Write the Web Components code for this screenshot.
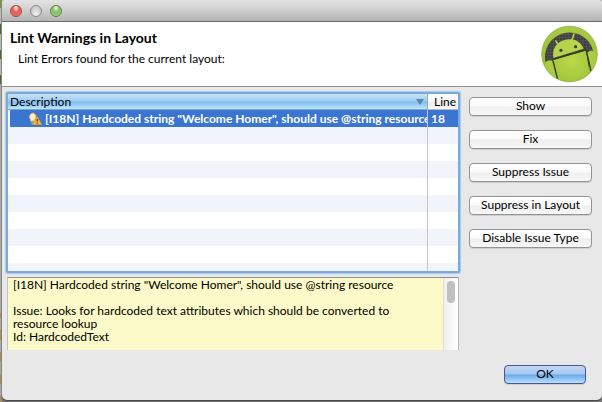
<!DOCTYPE html>
<html lang="en">
<head>
<meta charset="utf-8">
<title>Lint Warnings in Layout</title>
<style>
html,body{height:100%;margin:0}
body{font:12px/13px Lato,"Open Sans",sans-serif;color:#000;background:#555}
</style>
</head>
<body>
<lint-dialog></lint-dialog>
<script>
function define(name, html) {
  const template = document.createElement('template');
  template.innerHTML = html;
  customElements.define(name, class extends HTMLElement {
    constructor() {
      super();
      this.attachShadow({mode: 'open'}).append(template.content.cloneNode(true));
    }
  });
}

define('title-bar', `
<style>
:host{display:flex;align-items:center;gap:8px;height:21px;padding-left:8px;border-bottom:1px solid #6b6b6b;
background:linear-gradient(#e3e3e3,#d3d3d3 40%,#b3b3b3);border-radius:4px 4px 0 0}
button{width:12px;height:12px;padding:0;border-radius:50%;border:1px solid #8b8b8b;background:radial-gradient(ellipse at 50% 85%,#f4f4f4,#c6c6c6 75%)}
.close{border-color:#9c4644;background:radial-gradient(ellipse at 50% 15%,#fbd0ca 0 12%,#e5534f 45%,#f48a84 100%)}
.zoom{border-color:#58823f;background:radial-gradient(ellipse at 50% 15%,#e0f0d0 0 12%,#80b961 45%,#bae49a 100%)}
</style>
<button class="close" aria-label="Close"></button><button aria-label="Minimize" disabled></button><button class="zoom" aria-label="Zoom"></button>`);

define('android-logo', `
<style>:host{display:block;width:58px;height:58px}svg{display:block}</style>
<svg viewBox="0 0 58 58" width="58" height="58" aria-hidden="true">
<defs>
<linearGradient id="g" x2="0" y2="1"><stop stop-color="#a9cb45"/><stop offset=".5" stop-color="#9cc435"/><stop offset="1" stop-color="#86ab28"/></linearGradient>
<radialGradient id="b" cx=".5" cy=".35" r=".7"><stop stop-color="#bbd84a"/><stop offset="1" stop-color="#9dc338"/></radialGradient>
<pattern id="p" width="3" height="3" patternUnits="userSpaceOnUse"><rect width="3" height="3" fill="#3e3e3f"/><path d="M0 .5H3M.5 0V3" stroke="#505051" stroke-width="1"/></pattern>
<clipPath id="c"><circle cx="28.500" cy="29" r="27.5"/></clipPath>
</defs>
<circle cx="28.500" cy="29" r="27.800" fill="url(#g)" stroke="#8fae45" stroke-width=".8"/>
<path d="M4.500 37A24.500 24.500 0 1 1 52.500 27L46 46H12Z" fill="url(#p)"/>
<g clip-path="url(#c)">
<path d="M12 35L45 25.500L50 58H18Z" fill="url(#b)"/>
<path d="M12.300 33C11 24 15 18 22 15.500C31 12.500 39.500 15.500 42.500 23.800Z" fill="#b5d44a"/>
<path d="M17.800 20L14.800 16M31 15L33 9" stroke="#b5d44a" stroke-width="1.600" stroke-linecap="round"/>
<path d="M4 38Q7.500 33.500 12 36.500L17 56L14 58H3Z" fill="#a9cc42"/>
<path d="M46 28Q49.500 23.500 54 27L58 40L51 48Z" fill="#a9cc42"/>
<path d="M12 34.300L45.500 24.700M12 36L16.500 54M45.200 25.500L50 46" fill="none" stroke="#333a1c" stroke-width="1.300"/>
</g>
<circle cx="20" cy="25.300" r="1.600" fill="#3b402c"/><circle cx="34.600" cy="21.700" r="1.600" fill="#3b402c"/>
</svg>`);

define('dialog-header', `
<style>
:host{display:flex;justify-content:space-between;background:#fff;height:65px;border-bottom:1px solid #929292;box-sizing:border-box}
.text{padding:8px 0 0 8px}
h1{font-size:14px;line-height:16px;margin:0 0 5px}
p{margin:0;padding-left:8px;line-height:15px}
android-logo{margin:3px 3px 0 0}
</style>
<div class="text"><h1><slot name="title"></slot></h1><p><slot></slot></p></div>
<android-logo></android-logo>`);

define('push-button', `
<style>
:host{display:block}
button{display:block;width:100%;height:19px;padding:0 0 1px;font:inherit;line-height:16px;color:#000;border:1px solid #939393;border-radius:4px;
background:linear-gradient(#fff,#fafafa 48%,#eee 52%,#f8f8f8);box-shadow:0 1px 0 #cfcfcf}
:host([primary]) button{border-color:#4a5595;background:linear-gradient(#c2d7f3,#a5c8f1 46%,#6ba8ec 54%,#b9e2fb)}
</style>
<button type="button"><slot></slot></button>`);

define('warning-icon', `
<style>:host{display:inline-block;width:14px;height:14px;vertical-align:middle}svg{display:block}</style>
<svg viewBox="0 0 14 14" width="14" height="14" aria-hidden="true">
<path d="M5 1A4 4 0 0 0 2.500 7.500V9H7V7.500A4 4 0 0 0 5 1Z" fill="#fff0c4" stroke="#e6b768"/>
<path d="M3 10H7M3.500 12H6.500" stroke="#c4a66e" stroke-width="1.400"/>
<path d="M9 4.500L13.500 12.500H5Z" fill="#fbc13d" stroke="#d99a3a" stroke-linejoin="round"/>
<path d="M9.200 7V9.500M9.200 10.500V11.700" stroke="#5a3510" stroke-width="1.300"/>
</svg>`);

define('issue-table', `
<style>
:host{display:block;height:177px;border:2px solid #78abdb;box-shadow:0 0 1px 1px #a9c9e8;border-radius:2px;overflow:hidden;
background:#fff repeating-linear-gradient(#fff 0 17px,#f1f5fb 17px 34px);background-position:0 16px;background-clip:padding-box;position:relative}
:host::after{content:"";position:absolute;top:16px;bottom:0;right:30px;width:1px;background:#c5c5c5}
table{width:100%;border-collapse:separate;border-spacing:0;table-layout:fixed}
th,td{padding:0;text-align:left;white-space:nowrap;overflow:hidden;height:17px;line-height:17px;box-sizing:border-box}
th{height:16px;line-height:15px;font-weight:normal}
th:last-child,td:last-child{width:31px}
th:last-child{border-left:1px solid #9eabb8;border-bottom:1px solid #bbb;background:linear-gradient(#fff,#f6f6f6 50%,#eee 52%,#f6f6f6);padding-left:6px}
th:first-child{border-bottom:1px solid #7fa8c0;background:linear-gradient(#c9e3f7,#9fcdf2 46%,#82bdf0 54%,#bce6fb)}
button{all:unset;display:flex;width:100%;align-items:center;justify-content:space-between;box-sizing:border-box;padding:0 3px 0 2px}
td{background:#3a75d2;color:#fff;font-weight:bold}
td:first-child{border-left:2px solid #fff;padding-left:18px}
td:last-child{padding-left:4px}
warning-icon{margin:-2px 3px 0 0}
</style>
<table>
<thead><tr><th aria-sort="descending"><button type="button">Description<svg width="8" height="7" viewBox="0 0 8 7" aria-hidden="true"><path d="M0 1H8L4 7Z" fill="#5788aa"/></svg></button></th><th>Line</th></tr></thead>
<tbody><tr aria-selected="true"><td><warning-icon></warning-icon>[I18N] Hardcoded string "Welcome Homer", should use @string resource</td><td>18</td></tr></tbody>
</table>`);

define('issue-details', `
<style>
:host{display:flex;height:73px;border-top:1px solid #8e8e8e;border-left:1px solid #c2c2c2;border-right:1px solid #b5b5b5;box-sizing:border-box;background:#fbfac8}
.text{flex:1;min-width:0;padding:0 20px 0 5px;white-space:pre-line;overflow:hidden}
.track{width:15px;box-sizing:border-box;border-left:1px solid #dedede;background:linear-gradient(90deg,#efefef,#fff);padding:3px 3px}
.thumb{height:22px;width:8px;border-radius:4px;background:#c0c0c0}
</style>
<div class="text" tabindex="0"><slot></slot></div>
<div class="track"><div class="thumb"></div></div>`);

define('background-edge', `
<style>:host{display:block;border-right:1px solid #8d8d8d;
background:linear-gradient(#6e9e27 0 8px,#bbb 8px 24px,#42711a 24px 34px,#bbb 34px 50px,#42711a 50px 59px,#bbb 59px 75px,#42711a 75px 84px,#aaa 84px 313px,transparent 313px),repeating-linear-gradient(#b48a40 0 10px,#aaa 10px 22px)}</style>`);

define('lint-dialog', `
<style>
:host{display:grid;grid-template-columns:2px minmax(0,1fr);min-height:100vh;background:linear-gradient(#bbb,#777)}
.window{display:flex;flex-direction:column;background:#e8e8e8;border-radius:4px 4px 5px 5px;margin-bottom:2px;box-shadow:0 1px 1px #444}
main{display:grid;grid-template-columns:minmax(0,1fr) 123px;gap:10px;padding:5px 10px 0 5px}
.left{display:flex;flex-direction:column;gap:4px}
issue-table{margin:0 -1px}
.actions{display:flex;flex-direction:column;gap:14px;padding-top:5px}
footer{display:flex;justify-content:flex-end;padding:15px 16px 16px}
footer push-button{width:82px}
</style>
<background-edge></background-edge>
<div class="window">
<title-bar></title-bar>
<dialog-header><span slot="title">Lint Warnings in Layout</span>Lint Errors found for the current layout:</dialog-header>
<main>
<div class="left">
<issue-table></issue-table>
<issue-details>[I18N] Hardcoded string "Welcome Homer", should use @string resource

Issue: Looks for hardcoded text attributes which should be converted to resource lookup
Id: HardcodedText</issue-details>
</div>
<div class="actions"><push-button>Show</push-button><push-button>Fix</push-button><push-button>Suppress Issue</push-button><push-button>Suppress in Layout</push-button><push-button>Disable Issue Type</push-button></div>
</main>
<footer><push-button primary>OK</push-button></footer>
</div>`);
</script>
</body>
</html>
